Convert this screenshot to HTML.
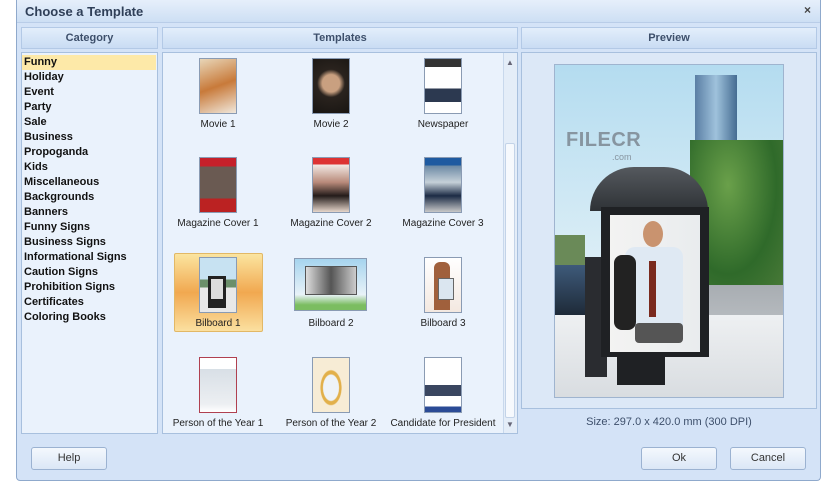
<!DOCTYPE html>
<html><head><style>
*{margin:0;padding:0;box-sizing:border-box}
body{width:836px;height:484px;background:#fff;font-family:"Liberation Sans",Tahoma,sans-serif;position:relative;overflow:hidden}
.a{position:absolute}
#win{left:16px;top:0;width:805px;height:481px;background:#d4e3f7;border:1px solid #8fa9cc;border-top:none;border-radius:0 0 4px 4px}
.hdr{background:linear-gradient(#e3eefb,#c9dcf3);border:1px solid #b3c9e6;color:#3d4f6b;font-weight:bold;font-size:11px;text-align:center;line-height:20px;height:22px;top:27px}
.pan{background:#eaf2fc;border:1px solid #a8c0de;top:52px}
.cat{font-size:11px;font-weight:bold;color:#111;line-height:15px;left:24px}
.th{width:38px;height:56px;border:1px solid #8a9bb3}
.lb{font-size:10px;color:#222;width:120px;text-align:center}
.btn{background:linear-gradient(#f4f8fd,#dbe7f6);border:1px solid #9bb2d1;border-radius:3px;font-size:11px;color:#333;text-align:center;line-height:21px;height:23px;width:76px;top:447px}
</style></head><body>
<div class="a" id="win"></div>
<div class="a" style="left:17px;top:0;width:803px;height:23px;background:linear-gradient(#e6effb,#cddff4);border-bottom:1px solid #b9cde8"></div>
<div class="a" style="left:25px;top:4px;font-size:13px;font-weight:bold;color:#2f3f58">Choose a Template</div>
<div class="a" style="left:804px;top:3px;font-size:12px;font-weight:bold;color:#444">×</div>

<div class="a hdr" style="left:21px;width:137px">Category</div>
<div class="a hdr" style="left:162px;width:356px">Templates</div>
<div class="a hdr" style="left:521px;width:296px">Preview</div>

<div class="a pan" style="left:21px;width:137px;height:382px"></div>
<div class="a" style="left:22px;top:55px;width:134px;height:15px;background:#fde9a8"></div>
<div class="a cat" style="top:55px">Funny<br>Holiday<br>Event<br>Party<br>Sale<br>Business<br>Propoganda<br>Kids<br>Miscellaneous<br>Backgrounds<br>Banners<br>Funny Signs<br>Business Signs<br>Informational Signs<br>Caution Signs<br>Prohibition Signs<br>Certificates<br>Coloring Books</div>

<div class="a pan" style="left:162px;width:356px;height:382px"></div>
<div class="a" style="left:503px;top:53px;width:14px;height:380px;background:#e4edf8;border-left:1px solid #c8d8ec"></div>
<div class="a" style="left:505px;top:143px;width:10px;height:275px;background:#f6f9fd;border:1px solid #c3d3e8;border-radius:2px"></div>
<div class="a" style="left:506px;top:58px;font-size:8px;color:#667">▲</div>
<div class="a" style="left:506px;top:420px;font-size:8px;color:#667">▼</div>

<div class="a th" style="left:199px;top:58px;background:linear-gradient(160deg,#e8d6b8,#c87a3a 50%,#f0e8dc)"></div>
<div class="a th" style="left:312px;top:58px;background:radial-gradient(circle at 50% 45%,#c9a080 0 25%,#2a231e 40%,#181512)"></div>
<div class="a th" style="left:424px;top:58px;background:linear-gradient(#333 0 15%,#fff 15% 55%,#2c3950 55% 80%,#fff 80%)"></div>
<div class="a lb" style="left:158px;top:119px">Movie 1</div>
<div class="a lb" style="left:271px;top:119px">Movie 2</div>
<div class="a lb" style="left:383px;top:119px">Newspaper</div>
<div class="a th" style="left:199px;top:157px;background:linear-gradient(#c5202a 0 16%,#6a5a52 16% 75%,#b22 75%)"></div>
<div class="a th" style="left:312px;top:157px;background:linear-gradient(#d33 0 12%,#f3ebe6 12%,#b88a7a 45%,#241c1a 70%,#e7d7cc)"></div>
<div class="a th" style="left:424px;top:157px;background:linear-gradient(#1e5aa0 0 14%,#6a88a4 14%,#c5d0d8 45%,#1c2b45 70%,#c8c8c8)"></div>
<div class="a lb" style="left:158px;top:218px">Magazine Cover 1</div>
<div class="a lb" style="left:271px;top:218px">Magazine Cover 2</div>
<div class="a lb" style="left:383px;top:218px">Magazine Cover 3</div>
<div class="a" style="left:174px;top:253px;width:89px;height:79px;background:linear-gradient(#fbe5a0,#f1a850 50%,#fbe0a0);border:1px solid #e2b866;border-radius:2px"></div>
<div class="a th" style="left:199px;top:257px;background:linear-gradient(#c7e2f2 0 40%,#6b8f6a 40% 55%,#e8e8e8 55%)"><div class="a" style="left:8px;top:18px;width:18px;height:32px;background:#222"></div><div class="a" style="left:11px;top:21px;width:12px;height:20px;background:#ddd"></div></div>
<div class="a" style="left:294px;top:258px;width:73px;height:53px;background:linear-gradient(#a6d4ee,#e8f2f8 70%,#7bbd60 90%);border:1px solid #8a9bb3"><div class="a" style="left:10px;top:7px;width:52px;height:29px;background:linear-gradient(90deg,#ddd,#555 50%,#ccc);border:1px solid #555"></div></div>
<div class="a th" style="left:424px;top:257px;background:linear-gradient(#fff,#f3e8e0)"><div class="a" style="left:9px;top:4px;width:16px;height:48px;background:#a0603c;border-radius:6px 6px 0 0"></div><div class="a" style="left:13px;top:20px;width:16px;height:22px;background:#dbe6f0;border:1px solid #666"></div></div>
<div class="a lb" style="left:158px;top:318px;color:#222">Bilboard 1</div>
<div class="a lb" style="left:271px;top:318px">Bilboard 2</div>
<div class="a lb" style="left:383px;top:318px">Bilboard 3</div>
<div class="a th" style="left:199px;top:357px;background:linear-gradient(#fff 0 20%,#d8dfe6 20%,#eceff2 85%,#fff);border-color:#b04050"></div>
<div class="a th" style="left:312px;top:357px;background:radial-gradient(ellipse at 50% 55%,#eef3f8 0 30%,#e2b04a 33% 40%,#f7ecd5 43%)"></div>
<div class="a th" style="left:424px;top:357px;background:linear-gradient(#fff 0 50%,#3a4660 50% 70%,#fff 70% 90%,#2b4b96 90%)"></div>
<div class="a lb" style="left:158px;top:418px">Person of the Year 1</div>
<div class="a lb" style="left:271px;top:418px">Person of the Year 2</div>
<div class="a lb" style="left:378px;top:418px;width:130px">Candidate for President</div>

<div class="a pan" style="left:521px;width:296px;height:357px;background:#dce8f7"></div>
<div class="a" style="left:554px;top:64px;width:230px;height:334px;overflow:hidden;background:linear-gradient(#b4dcf0,#dceef6 60%,#e8ecef);border:1px solid #9fb4cf">
 <div class="a" style="left:140px;top:10px;width:42px;height:150px;background:linear-gradient(90deg,#5a7ea4,#9fc2dc,#456c92)"></div>
 <div class="a" style="left:135px;top:75px;width:95px;height:150px;background:radial-gradient(ellipse at 40% 30%,#6aa04a,#2f6a2a 60%,#4a7a38)"></div>
 <div class="a" style="left:0;top:170px;width:30px;height:40px;background:#6a8a58"></div>
 <div class="a" style="left:0;top:200px;width:40px;height:50px;background:linear-gradient(#3e5a7a,#1e2a38)"></div>
 <div class="a" style="left:140px;top:220px;width:90px;height:80px;background:linear-gradient(#a8adb2,#c9cdd0)"></div>
 <div class="a" style="left:0;top:250px;width:230px;height:84px;background:linear-gradient(#eef0f2,#d8dce0)"></div>
 <div class="a" style="left:35px;top:102px;width:118px;height:44px;background:linear-gradient(#55595e,#2e3236);border-radius:55px 55px 0 0"></div>
 <div class="a" style="left:30px;top:192px;width:22px;height:120px;background:#2a2c30"></div>
 <div class="a" style="left:46px;top:142px;width:108px;height:150px;background:#1f2124"></div>
 <div class="a" style="left:62px;top:288px;width:48px;height:32px;background:#1f2124"></div>
 <div class="a" style="left:55px;top:150px;width:90px;height:137px;background:linear-gradient(90deg,#f3f3f2,#e9ecee)"></div>
 <div class="a" style="left:88px;top:156px;width:20px;height:26px;background:#c9936f;border-radius:50%"></div>
 <div class="a" style="left:70px;top:182px;width:58px;height:80px;background:#dfe9f3;border-radius:10px 10px 0 0"></div>
 <div class="a" style="left:59px;top:190px;width:22px;height:75px;background:#222;border-radius:8px"></div>
 <div class="a" style="left:94px;top:196px;width:7px;height:56px;background:#7a2a1e"></div>
 <div class="a" style="left:80px;top:258px;width:48px;height:20px;background:#555;border-radius:4px"></div>
</div>
<div class="a" style="left:566px;top:129px;font-size:20px;font-weight:bold;color:#8795a0;letter-spacing:0.5px">FILECR</div>
<div class="a" style="left:612px;top:152px;font-size:9px;color:#8795a0">.com</div>
<div class="a" style="left:521px;top:416px;width:296px;text-align:center;font-size:11px;color:#3d4f6b">Size: 297.0 x 420.0 mm (300 DPI)</div>

<div class="a btn" style="left:31px">Help</div>
<div class="a btn" style="left:641px">Ok</div>
<div class="a btn" style="left:730px">Cancel</div>
</body></html>
